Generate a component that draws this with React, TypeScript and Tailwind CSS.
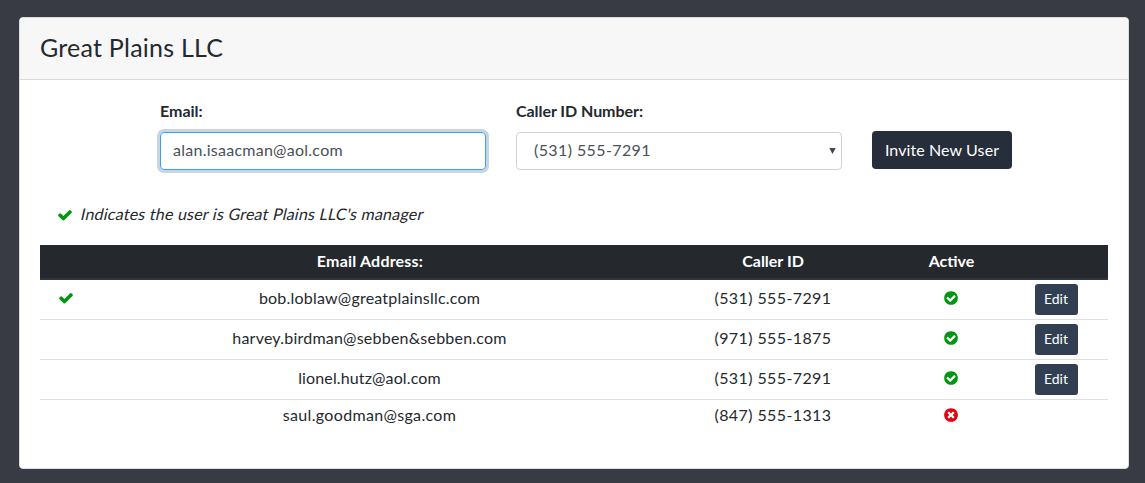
import React from "react";

const CIRCLE =
  "M1664 896q0 209-103 385.5t-279.5 279.5-385.5 103-385.5-103-279.5-279.5-103-385.5 103-385.5 279.5-279.5 385.5-103 385.5 103 279.5 279.5 103 385.5z";

function CheckIcon() {
  return (
    <svg viewBox="0 0 1792 1792" className="size-4 fill-[#009610]">
      <path d="M1671 566q0 40-28 68l-724 724-136 136q-28 28-68 28t-68-28l-136-136-362-362q-28-28-28-68t28-68l136-136q28-28 68-28t68 28l294 295 656-657q28-28 68-28t68 28l136 136q28 28 28 68z" />
    </svg>
  );
}

function StatusIcon({ active }: { active: boolean }) {
  return active ? (
    <svg viewBox="0 0 1792 1792" className="size-4">
      <path className="fill-[#009610]" d={CIRCLE} />
      <path
        className="fill-white"
        d="M1412 734q0-28-18-46l-91-90q-19-19-45-19t-45 19l-408 407-226-226q-19-19-45-19t-45 19l-91 90q-18 18-18 46 0 27 18 45l362 362q19 19 45 19 27 0 46-19l543-543q18-18 18-45z"
      />
    </svg>
  ) : (
    <svg viewBox="0 0 1792 1792" className="size-4">
      <path className="fill-[#e3000f]" d={CIRCLE} />
      <path
        className="fill-white"
        d="M1277 1122q0-26-19-45l-181-181 181-181q19-19 19-45 0-27-19-46l-90-90q-19-19-46-19-26 0-45 19l-181 181-181-181q-19-19-45-19-27 0-46 19l-90 90q-19 19-19 46 0 26 19 45l181 181-181 181q-19 19-19 45 0 27 19 46l90 90q19 19 46 19 26 0 45-19l181-181 181 181q19 19 45 19 27 0 46-19l90-90q19-19 19-46z"
      />
    </svg>
  );
}

const GRID = "grid grid-cols-[51px_557px_250px_106px_104px] items-center justify-items-center";

const users = [
  { email: "bob.loblaw@greatplainsllc.com", phone: "(531) 555-7291", manager: true, active: true, track: "tracking-[0.21px]" },
  { email: "harvey.birdman@sebben&sebben.com", phone: "(971) 555-1875", manager: false, active: true, track: "tracking-[0.22px]" },
  { email: "lionel.hutz@aol.com", phone: "(531) 555-7291", manager: false, active: true, track: "tracking-[0.13px]" },
  { email: "saul.goodman@sga.com", phone: "(847) 555-1313", manager: false, active: false, track: "tracking-[0.34px]" },
];

export default function App() {
  return (
    <div className="h-[483px] w-[1145px] bg-[#393b44] pt-[17px] pl-[19px] font-['Lato',sans-serif] text-base text-[#24292e]">
      <div className="h-[452px] w-[1110px] overflow-hidden rounded-[4px] border border-[#dcdcde] bg-white">
        <div className="flex h-[62px] items-center border-b border-[#d9d9d9] bg-[#f7f7f7] pb-[3px] pl-5">
          <h1 className="text-[25px] leading-8 tracking-[0.23px]">Great Plains LLC</h1>
        </div>
        <div className="px-5">
          <div className="flex gap-[30px] pt-[19px] pl-[120px]">
            <div className="w-[326px]">
              <label className="block h-[33px] leading-6 font-bold">Email:</label>
              <div className="flex h-[38px] items-center rounded-[4px] border border-[#3d9ef5] px-3 pb-0.5 tracking-[0.26px] text-[#495057] shadow-[0_0_0_3px_#c8d5e2]">
                alan.isaacman@aol.com
              </div>
            </div>
            <div className="w-[326px]">
              <label className="block h-[33px] leading-6 font-bold tracking-[-0.05px]">Caller ID Number:</label>
              <div className="flex h-[38px] items-center justify-between rounded-[4px] border border-[#ced0de] pr-[5px] pl-[17px] text-[#495057]">
                <span className="pb-0.5 tracking-[0.4px]">(531) 555-7291</span>
                <svg viewBox="0 0 7 6" className="h-1.5 w-[7px] fill-[#424950]">
                  <path d="M0.3 0H6.7L3.5 6z" />
                </svg>
              </div>
            </div>
            <button className="mt-8 flex h-[38px] w-[140px] items-center justify-center rounded-[4px] bg-[#252e3a] pb-px tracking-[0.1px] text-white">
              Invite New User
            </button>
          </div>
          <div className="mt-[33px] flex h-6 items-center pl-[17px]">
            <CheckIcon />
            <span className="ml-2 -skew-x-[13deg] pb-0.5 tracking-[0.22px]">
              Indicates the user is Great Plains LLC's manager
            </span>
          </div>
          <div className="mt-[18px]">
            <div className={`${GRID} h-[35px] border-b-2 border-[#32373f] bg-[#25292e] pb-0.5 font-bold text-white`}>
              <span />
              <span className="pl-px tracking-[0.2px]">Email Address:</span>
              <span>Caller ID</span>
              <span className="pl-px">Active</span>
              <span />
            </div>
            {users.map((u) => (
              <div
                key={u.email}
                className={`${GRID} h-10 border-b border-[#dcdee3] last:h-8 last:border-b-0`}
              >
                <span className="pb-[3px]">{u.manager && <CheckIcon />}</span>
                <span className={`pb-[3px] ${u.track}`}>{u.email}</span>
                <span className="pb-[3px] tracking-[0.4px]">{u.phone}</span>
                <span className="pb-[3px]">
                  <StatusIcon active={u.active} />
                </span>
                {u.active && (
                  <button className="h-[31px] w-[43px] rounded-[3px] bg-[#323f53] pb-px text-sm text-white">Edit</button>
                )}
              </div>
            ))}
          </div>
        </div>
      </div>
    </div>
  );
}
